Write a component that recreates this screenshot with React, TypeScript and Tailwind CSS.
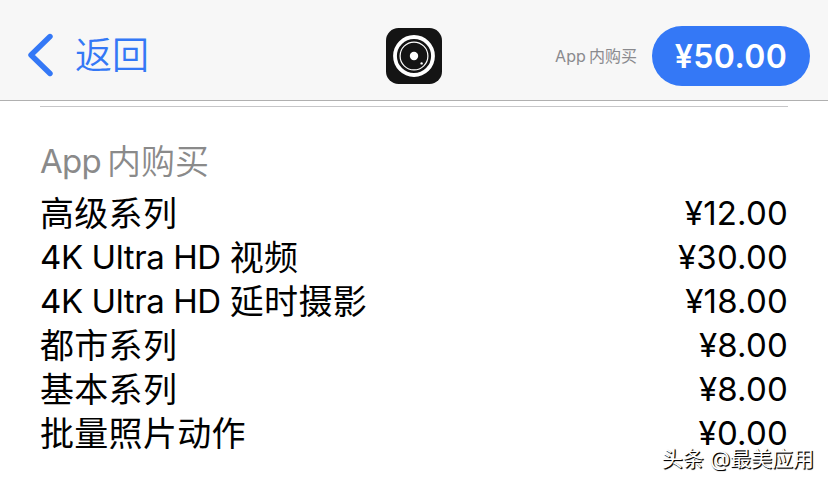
const items = [
  { latin: '', name: '高级系列', price: '12.00' },
  { latin: '4K Ultra HD', name: '视频', price: '30.00' },
  { latin: '4K Ultra HD', name: '延时摄影', price: '18.00' },
  { latin: '', name: '都市系列', price: '8.00' },
  { latin: '', name: '基本系列', price: '8.00' },
  { latin: '', name: '批量照片动作', price: '0.00' },
];

function AppIcon() {
  return (
    <svg width="56" height="56" viewBox="0 0 56 56">
      <rect width="56" height="56" rx="12.5" fill="#141414" />
      <circle cx="28" cy="28" r="19" fill="none" stroke="#fff" strokeWidth="3.8" />
      <circle cx="28" cy="28" r="13.9" fill="none" stroke="#fff" strokeWidth="1.2" />
      <circle cx="28" cy="28" r="4.2" fill="#fff" />
      <circle cx="35.6" cy="35.4" r="1.2" fill="#fff" />
    </svg>
  );
}

export default function App() {
  return (
    <div className="relative h-[483px] w-[828px] overflow-hidden bg-white font-['Inter','Noto_Sans_CJK_SC',sans-serif] text-black">
      <header className="flex h-[101px] items-start border-b border-[#b0b0b0] bg-[#f7f7f7]">
        <button className="flex h-[110px] w-[386px] items-center pl-[27px] text-[#3478f6]">
          <svg width="27" height="44" viewBox="0 0 27 44" fill="none" stroke="currentColor" strokeWidth="5.4" strokeLinecap="round" strokeLinejoin="round">
            <path d="M23 3.5 4 22 23 40.5" />
          </svg>
          <span className="ml-[21px] pt-[2px] text-[37px] leading-[44px] font-[350]">返回</span>
        </button>
        <div className="pt-[28px]"><AppIcon /></div>
        <div className="ml-auto flex items-center pt-[26px] pr-[18px]">
          <span className="mr-[15px] flex items-center gap-[3px] text-[16px] leading-[20px] text-[#8a8a8e]">
            <span className="tracking-[0.1px]">App</span>
            <span>内购买</span>
          </span>
          <button className="h-[60px] w-[158px] rounded-full bg-[#3478f6] pt-[2px] text-[32px] font-semibold tracking-[0.4px] text-white">¥50.00</button>
        </div>
      </header>
      <main className="mx-[40px] mt-[5px] border-t border-[#c6c6c8] pt-[32px]">
        <h2 className="flex h-[44px] items-center gap-[6px] text-[33px] leading-[44px] font-normal text-[#8a8a8a]">
          <span className="tracking-[-0.7px]">App</span>
          <span className="pt-px text-[34px] font-[350]">内购买</span>
        </h2>
        <ul className="pt-[8px]">
          {items.map((item) => (
            <li key={item.name} className="flex h-[44px] items-center justify-between text-[33px] leading-[44px]">
              <span className="flex items-center gap-[9px]">
                {item.latin && <span className="tracking-[-0.4px]">{item.latin}</span>}
                <span className="pt-[1px] text-[34px] tracking-[0.3px]">{item.name}</span>
              </span>
              <span className="tracking-[0.2px]">¥{item.price}</span>
            </li>
          ))}
        </ul>
      </main>
      <div className="absolute right-[14px] bottom-[9px] text-[21px] leading-[30px] whitespace-nowrap text-white [text-shadow:1px_1px_1px_#000,1px_1px_0_#222]">
        头条 @最美应用
      </div>
    </div>
  );
}
